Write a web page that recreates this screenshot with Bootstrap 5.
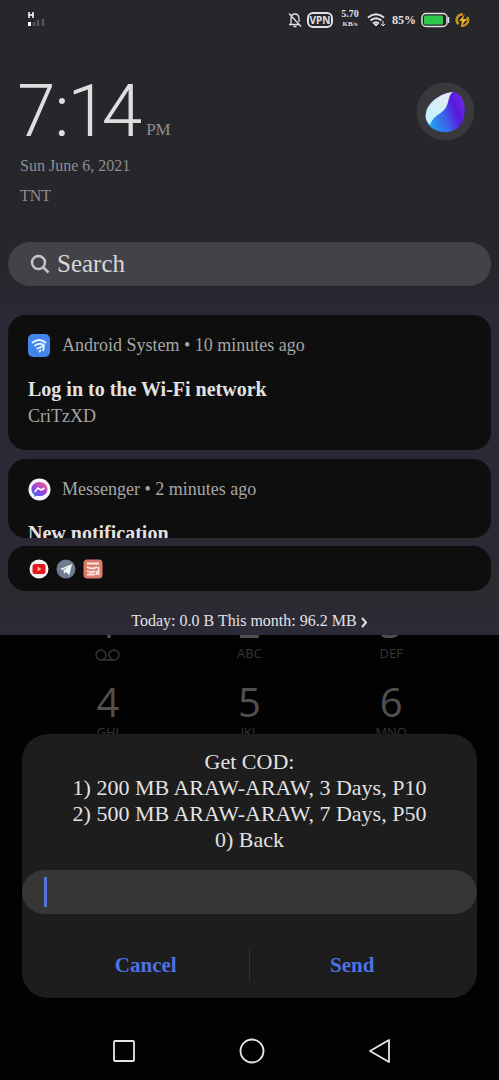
<!DOCTYPE html>
<html lang="en">
<head>
<meta charset="utf-8">
<meta name="viewport" content="width=device-width, initial-scale=1">
<title>Notification shade</title>
<link href="https://cdn.jsdelivr.net/npm/bootstrap@5.3.0/dist/css/bootstrap.min.css" rel="stylesheet">
<style>
body{background:#020202;color:#e2e2e4;font-family:"Liberation Serif",serif}
.shade{background:linear-gradient(#26262b 0,#26262b 42%,#2a2935 50%,#2a2935 84%,#2b2b2f 93%,#2b2a38);padding-bottom:1px}
.status-line{height:40px;gap:5px;padding:0 29px 0 28px}
.vpn{border:2px solid #e2e2e4;border-radius:6px;width:26px;height:16px;font:700 10px/12px "Open Sans",sans-serif}
.rate{font-size:10px;line-height:10px;width:24px;margin-top:-2px}
.rate-unit{font-size:7px;display:block}
.percent{font-size:12px}
.clock-row{padding:42px 24px 0 18px}
.clock{font:300 73px/58px Roboto,sans-serif;font-feature-settings:"pnum";color:#dededf}
.meridiem{font-size:17px;line-height:20px;color:#8e8e92}
.meta{font-size:16px;line-height:30px;padding:10px 20px 0;color:#8e8e92}
.search-pill{margin:31px 8px 0;height:44px;background:#434347;padding:0 22px;gap:7px}
.search-pill input,.reply input{background:none;border:0;outline:0;min-width:0}
.search-pill input{font-size:25px;color:#e0e0e2}
.search-pill input::placeholder{color:#d8d8da;opacity:1}
.note{margin:0 8px;background:#0e0e0e;border-radius:18px;padding:0 20px;overflow:hidden}
.note-first{margin-top:29px;padding-bottom:21px}
.note-cut{margin-top:9px;height:79px}
.note-mini{margin-top:8px;height:45px;gap:7px;padding:0 21px}
.note-head{height:60px;gap:11px;font-size:18px;color:#a6a6a6}
.note-title{font-size:20px;line-height:28px;font-weight:700;margin:0}
.note-text{font-size:18px;line-height:26px;margin:0;color:#a6a6a6}
.usage{height:43px;padding-top:16px;font-size:16px;line-height:28px}
.usage a{color:#e2e2e4}
.keypad{font-family:"Open Sans",sans-serif;color:#505050;padding:0 37px;height:99px;overflow:hidden}
.key{font-size:40px;line-height:48px}
.key-cut{height:3px;overflow:hidden}
.key-cut .key{line-height:40px;margin-top:-32px}
.letters{font-size:13px;line-height:18px;padding:6px 0 16px;color:#363636}
.letters-cut{margin-top:-3px}
.dialog-box{margin:0 22px;background:#1d1d1d;border-radius:26px}
.menu-text{font-size:22px;line-height:26px;padding:15px 0 17px}
.reply{background:#363636;height:44px;padding:0 22px}
.caret{width:3px;height:30px;background:#5873dc}
.actions{height:84px;padding:20px 22px 0 21px}
.act{color:#4c73e6;font-size:21px;font-weight:700}
.split{width:1px;height:32px;background:#333}
.sys{height:82px;padding:40px 106px 0 111px}
</style>
</head>
<body>
<section class="shade">
  <header class="status-line d-flex align-items-center">
    <svg class="me-auto" width="18" height="16" viewBox="0 0 18 16"><path d="M1 0v6M5 0v6M1 3h4" stroke="#fff" stroke-width="1.5"/><rect y="10" width="3" height="4" fill="#fff"/><path d="M6 14v-4M10 14V8M15 14V7" stroke="#55555a" stroke-width="2.5"/></svg>
    <svg width="14" height="16" viewBox="0 0 14 16" fill="none" stroke="#e2e2e4" stroke-width="1.3"><path d="M3 12V7q0-5 4-5t4 5v3M1 12.5h10M5.500 14.500h3M1 1.500l12 13"/></svg>
    <span class="vpn text-center">VPN</span>
    <span class="rate text-center fw-bold">5.70<span class="rate-unit">KB/s</span></span>
    <svg width="20" height="16" viewBox="0 0 20 16" fill="none" stroke="#e2e2e4" stroke-width="2"><path d="M1 5.500q8-6.500 16 0M3.500 8.500q5.500-4.500 11 0M6 11.500q3-2.500 6 0"/><path d="M7 12h4l-2 2z" fill="#e2e2e4" stroke-width="1"/><path d="M16 9v5M14 12l2 2 2-2" stroke-width="1"/></svg>
    <span class="percent fw-bold">85%</span>
    <svg width="29" height="16" viewBox="0 0 29 16"><rect x="1" y="1.500" width="25" height="13" rx="4" fill="none" stroke="#e2e2e4" stroke-width="1.5"/><rect x="3" y="3.500" width="19" height="9" rx="1.500" fill="#2dca4b"/><path d="M27.500 5v6" stroke="#e2e2e4" stroke-width="1.5"/></svg>
    <svg width="15" height="16" viewBox="0 0 15 16"><path d="M3.500 12A5.500 5.500 0 0 1 8 2.500M12 5a5.500 5.500 0 0 1-6 8.500" fill="none" stroke="#c9951e" stroke-width="2.500"/><path d="M10 2L4 9h3l-1 5 6-7H8z" fill="#f0b928"/></svg>
  </header>

  <div class="clock-row d-flex justify-content-between align-items-start">
    <div class="d-flex align-items-end gap-1"><span class="clock">7:14</span><span class="meridiem">PM</span></div>
    <svg width="59" height="59" viewBox="0 0 59 59" role="img" aria-label="Profile">
      <defs><linearGradient id="blue" x1="0" y1=".7" x2="1" y2=".3"><stop stop-color="#1fa9ee"/><stop offset=".45" stop-color="#3b62ea"/><stop offset=".75" stop-color="#5a16dc"/><stop offset="1" stop-color="#6a2ae6"/></linearGradient><linearGradient id="ice" x1="0" y1="1" x2=".6" y2="0"><stop stop-color="#bdf3fa"/><stop offset="1" stop-color="#e3ebf8"/></linearGradient></defs>
      <circle cx="29.500" cy="29.500" r="29" fill="#39393c"/>
      <path d="M36 10C45 9 51 22 48 35C46 46 36 51 27 50C17 49 8 42 10 31C12 20 25 11 36 10Z" fill="url(#blue)"/>
      <path d="M37 10C31 14 34 23 27 29C21 34 17 35 14 43C10 39 9 35 10 31C12 20 25 11 37 10Z" fill="url(#ice)"/>
    </svg>
  </div>
  <div class="meta"><div>Sun June 6, 2021</div><div>TNT</div></div>

  <label class="search-pill rounded-pill d-flex align-items-center">
    <svg width="20" height="20" viewBox="0 0 20 20" fill="none" stroke="#c4c4c7" stroke-width="2.500"><circle cx="8.500" cy="8.500" r="6.500"/><path d="M13.500 13.500l5 5"/></svg>
    <input class="flex-grow-1 p-0" type="search" placeholder="Search" aria-label="Search">
  </label>

  <article class="note note-first">
    <div class="note-head d-flex align-items-center">
      <svg width="23" height="23" viewBox="0 0 23 23"><rect width="22" height="23" rx="5" fill="#4385ea"/><g fill="none" stroke="#e6f2ff" stroke-width="1.8"><path d="M4 9q7-6 14 0M6.500 12q4-4 9.500-1M9 15q2-2 4-1"/><path d="M11 18l2-2M12 13l4-1-1 5"/></g></svg>
      <span>Android System • 10 minutes ago</span>
    </div>
    <h2 class="note-title">Log in to the Wi-Fi network</h2>
    <p class="note-text">CriTzXD</p>
  </article>

  <article class="note note-cut">
    <div class="note-head d-flex align-items-center">
      <svg width="23" height="23" viewBox="0 0 23 23"><defs><linearGradient id="msg" x1="0" y1="1" x2=".7" y2="0"><stop stop-color="#2b7bf5"/><stop offset=".5" stop-color="#8b45e0"/><stop offset="1" stop-color="#ec5b92"/></linearGradient></defs><circle cx="11.500" cy="11.500" r="11" fill="#f7f4fa"/><path d="M11.500 4c-4.500 0-8 3-8 7.300 0 2.400 1 4.200 2.700 5.400V19l2.300-1.300c1 .3 2 .4 3 .4 4.500 0 8-2.800 8-6.900S16 4 11.500 4z" fill="url(#msg)"/><path d="M6.500 14l3.500-4 3 2 3.500-2" fill="none" stroke="#fff" stroke-width="1.700"/></svg>
      <span>Messenger • 2 minutes ago</span>
    </div>
    <h2 class="note-title">New notification</h2>
  </article>

  <div class="note note-mini d-flex align-items-center">
    <svg width="20" height="20" viewBox="0 0 20 20"><circle cx="10" cy="10" r="9.500" fill="#f5f1ef"/><rect x="3.500" y="5" width="13" height="10" rx="2.500" fill="#e3161b"/><path d="M8.500 7.500v5l4-2.500z" fill="#ffb49a"/></svg>
    <svg width="20" height="20" viewBox="0 0 20 20"><circle cx="10" cy="10" r="9.500" fill="#6b7c8e"/><path d="M4 10l12-5-2.500 11-4-3-1.500 2-.5-3.500 5-4-6 3.500z" fill="#f2f5f8"/></svg>
    <svg width="20" height="20" viewBox="0 0 20 20"><rect x=".5" y=".5" width="19" height="19" rx="4" fill="#dd7b69"/><path d="M4 4.500h12M4 8q5 3 10 0M4 12q5 2 8 0M4 15.500h8M15.500 8v8M13.500 12v4" fill="none" stroke="#f9e9e4" stroke-width="1.800"/></svg>
  </div>

  <div class="usage text-center"><a class="text-decoration-none" href="#">Today: 0.0 B This month: 96.2 MB <svg width="7" height="11" viewBox="0 0 7 11" fill="none" stroke="currentColor" stroke-width="2"><path d="M1 1l4 4.500L1 10"/></svg></a></div>
</section>

<main>
  <div class="keypad">
    <div class="row g-0 text-center key-cut"><div class="col key">1</div><div class="col key">2</div><div class="col key">3</div></div>
    <div class="row g-0 text-center letters"><div class="col"><svg width="25" height="12" viewBox="0 0 25 12" fill="none" stroke="currentColor" stroke-width="1.500"><circle cx="6" cy="6" r="5"/><circle cx="19" cy="6" r="5"/><path d="M6 11h13"/></svg></div><div class="col">ABC</div><div class="col">DEF</div></div>
    <div class="row g-0 text-center"><div class="col key">4</div><div class="col key">5</div><div class="col key">6</div></div>
    <div class="row g-0 text-center letters letters-cut pt-0"><div class="col">GHI</div><div class="col">JKL</div><div class="col">MNO</div></div>
  </div>

  <form class="dialog-box">
    <div class="menu-text text-center">Get COD:<br>1) 200 MB ARAW-ARAW, 3 Days, P10<br>2) 500 MB ARAW-ARAW, 7 Days, P50<br>0) Back</div>
    <label class="reply rounded-pill d-flex align-items-center"><span class="caret"></span><input class="flex-grow-1" type="text" aria-label="Reply"></label>
    <div class="actions d-flex align-items-center">
      <button type="button" class="btn act flex-fill w-50 border-0">Cancel</button><span class="split"></span><button type="button" class="btn act flex-fill w-50 border-0">Send</button>
    </div>
  </form>

  <nav class="sys d-flex justify-content-between align-items-start" aria-label="System">
    <button class="btn p-0 border-0" aria-label="Recent apps"><svg width="26" height="26" viewBox="0 0 26 26" fill="none" stroke="#e6e6e6" stroke-width="1.800"><rect x="3" y="3" width="20" height="20" rx="1"/></svg></button>
    <button class="btn p-0 border-0" aria-label="Home"><svg width="26" height="26" viewBox="0 0 26 26" fill="none" stroke="#e6e6e6" stroke-width="1.800"><circle cx="13" cy="13" r="11.500"/></svg></button>
    <button class="btn p-0 border-0" aria-label="Back"><svg width="26" height="26" viewBox="0 0 26 26" fill="none" stroke="#e6e6e6" stroke-width="1.800" stroke-linejoin="round"><path d="M22 2v22L3 13z"/></svg></button>
  </nav>
</main>
<script src="https://cdn.jsdelivr.net/npm/bootstrap@5.3.0/dist/js/bootstrap.bundle.min.js"></script>
</body>
</html>
